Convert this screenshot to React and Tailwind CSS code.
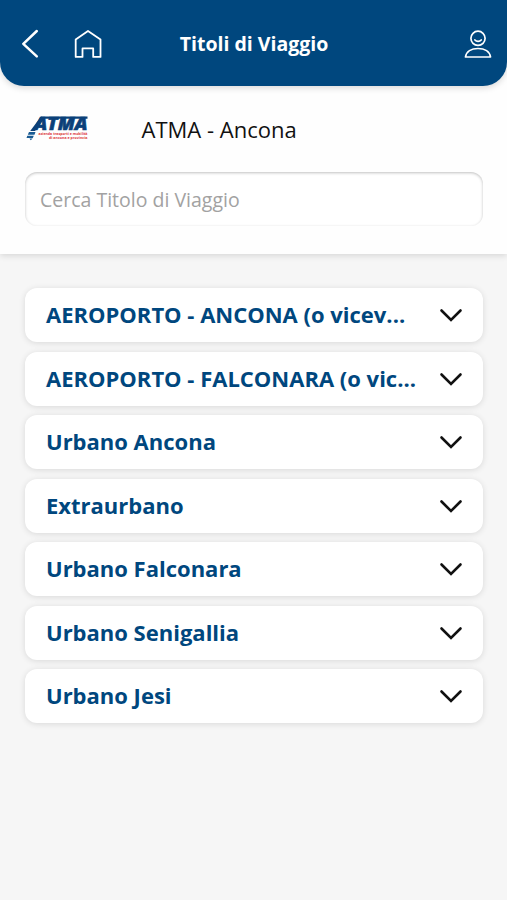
import { useState } from 'react'

const CATEGORIES = [
  { id: 1, label: 'AEROPORTO - ANCONA (o vicev...' },
  { id: 2, label: 'AEROPORTO - FALCONARA (o vic...' },
  { id: 3, label: 'Urbano Ancona' },
  { id: 4, label: 'Extraurbano' },
  { id: 5, label: 'Urbano Falconara' },
  { id: 6, label: 'Urbano Senigallia' },
  { id: 7, label: 'Urbano Jesi' },
]

function BackIcon() {
  return (
    <svg width="18" height="30" viewBox="0 0 18 30" fill="none" stroke="currentColor" strokeWidth="2.5" strokeLinecap="round">
      <path d="M15.8 2 2.3 14.8 15.8 27.4" strokeLinejoin="round" />
    </svg>
  )
}

function HomeIcon() {
  return (
    <svg width="28" height="30" viewBox="0 0 28 30" fill="none" stroke="currentColor" strokeWidth="1.8" strokeLinejoin="round">
      <path d="M1.700 10.500 14 2l12.500 8.500v17.400h-7.300V19.400H8.500v8.500H1.700Z" />
    </svg>
  )
}

function UserIcon() {
  return (
    <svg width="28" height="30" viewBox="0 0 28 30" fill="none" stroke="currentColor" strokeWidth="1.7" strokeLinejoin="round" strokeLinecap="round">
      <circle cx="14" cy="9.3" r="7.1" />
      <path d="M10.9 11c1.6 1.800 4.700 1.800 6.300 0" />
      <path d="M1.500 28c.8-5.200 5.700-8.500 12.500-8.500s11.700 3.300 12.500 8.500Z" />
    </svg>
  )
}

function ChevronIcon() {
  return (
    <svg width="24" height="16" viewBox="0 0 24 16" fill="none" stroke="currentColor" strokeWidth="2.6" strokeLinecap="round" strokeLinejoin="miter">
      <path d="M2.500 3.500 12 13 21.500 3.500" />
    </svg>
  )
}

function AtmaLogo() {
  return (
    <svg width="64" height="30" viewBox="0 0 64 30" role="img" aria-label="ATMA" className="overflow-visible">
      <path d="M15 2.500H61.500V4.800H13.500Z" fill="#0b4079" />
      <path d="M15 2.500 4.200 17h4.800l9-12Z" fill="#0b4079" />
      <text x="8.500" y="16.200" textLength="53" lengthAdjust="spacingAndGlyphs" fontSize="18" fontWeight="800" fontStyle="italic" fill="#0b4079" stroke="#0b4079" strokeWidth=".6" className="font-['Open_Sans',sans-serif]">ATMA</text>
      <path d="M3 18h6.500l-1 2.700H1.800ZM1.300 21.700h6.500l-1 2.300H.500ZM3.500 24.500h3.200l-2 1.800Z" fill="#1a5b93" />
      <text x="12.500" y="20.900" textLength="49" lengthAdjust="spacingAndGlyphs" fontSize="4" fontWeight="700" fill="#dc353b" className="font-['Open_Sans',sans-serif]">azienda trasporti e mobilità</text>
      <text x="23" y="25.200" textLength="38.500" lengthAdjust="spacingAndGlyphs" fontSize="4" fontWeight="700" fill="#dc353b" className="font-['Open_Sans',sans-serif]">di ancona e provincia</text>
    </svg>
  )
}

export default function App() {
  const [search, setSearch] = useState('')

  return (
    <div className="flex h-screen flex-col bg-[#f6f6f6] font-['Open_Sans',sans-serif]">
      <div className="h-[254px] shrink-0 bg-[#fefefe] shadow-[0_2px_6px_rgba(0,0,0,0.12)]">
        <header className="grid h-[86px] grid-cols-[1fr_auto_1fr] items-center rounded-b-[24px] bg-[#00477e] pt-0.5 pr-[15px] pl-[21px] text-white shadow-[0_2px_6px_rgba(0,0,0,0.15)]">
          <div className="flex items-center gap-[35px]">
            <button aria-label="Indietro"><BackIcon /></button>
            <button aria-label="Home"><HomeIcon /></button>
          </div>
          <h1 className="-ml-[5px] text-[19.500px] leading-7 font-bold">Titoli di Viaggio</h1>
          <button aria-label="Profilo" className="justify-self-end"><UserIcon /></button>
        </header>

        <div className="flex h-[86px] items-center gap-[51.500px] pl-[26px]">
          <AtmaLogo />
          <p className="text-[22px] leading-8 text-[#111]">ATMA - Ancona</p>
        </div>

        <div className="pr-[24.500px] pl-[25px]">
          <input
            value={search}
            onChange={e => setSearch(e.target.value)}
            placeholder="Cerca Titolo di Viaggio"
            className="block h-[54px] w-full rounded-[12px] bg-white px-[15px] pt-px text-[19.500px] text-gray-700 shadow-[inset_0_1px_3px_rgba(0,0,0,0.25)] outline-none placeholder:text-[#a2a2a2]"
          />
        </div>
      </div>

      <ul className="flex flex-col gap-[9.500px] pt-[34px] pr-[24px] pl-[25px]">
        {CATEGORIES.map(c => (
          <li key={c.id}>
            <button className="flex h-[54px] w-full items-center justify-between rounded-[12px] bg-white pr-5 pl-[21px] text-left shadow-[0_1px_6px_rgba(0,0,0,0.12)]">
              <span className="-mt-0.5 text-[22px] leading-8 font-bold whitespace-nowrap text-[#00477e]">{c.label}</span>
              <span className="text-[#111]"><ChevronIcon /></span>
            </button>
          </li>
        ))}
      </ul>
    </div>
  )
}
